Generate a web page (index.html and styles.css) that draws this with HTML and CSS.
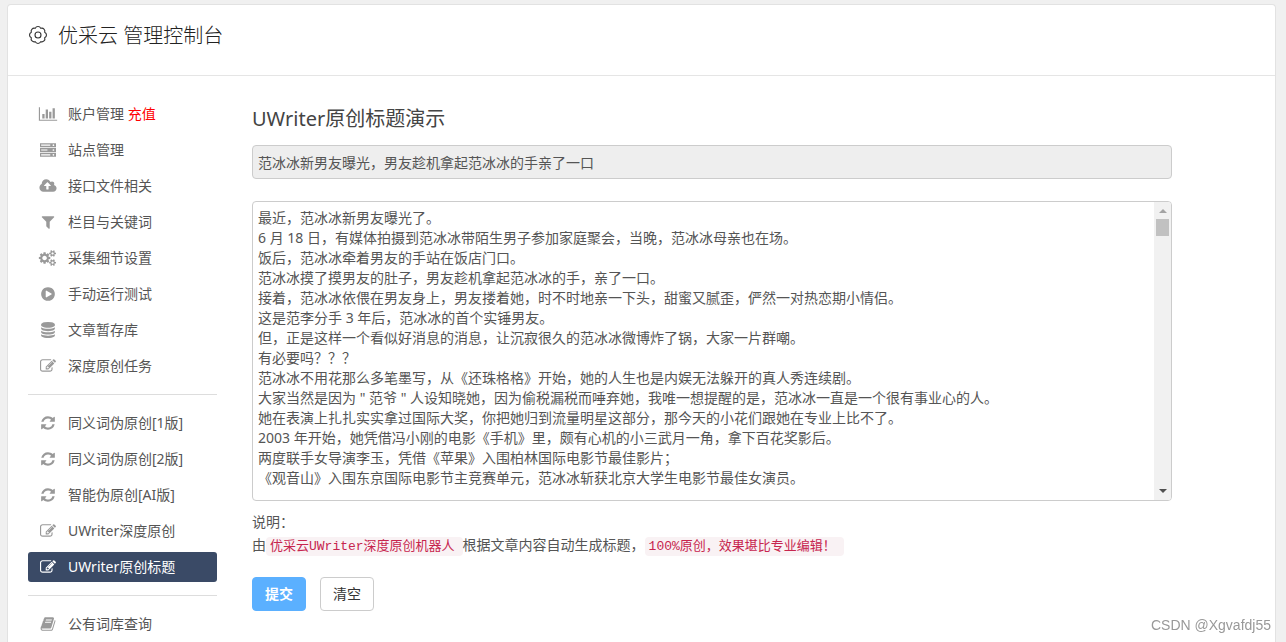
FILE: index.html
```html
<!DOCTYPE html>
<html lang="zh-CN">
<head>
  <meta charset="UTF-8">
  <title>优采云 管理控制台</title>
  <link rel="stylesheet" href="styles.css">
</head>
<body>
<!-- 图标 -->
<svg class="sprite" aria-hidden="true">
  <symbol id="i-chart" viewBox="0 0 2048 1792"><path d="M640 896v512h-256v-512h256zm384-512v1024h-256v-1024h256zm1024 1152v128h-2048v-1536h128v1408h1920zm-640-896v768h-256v-768h256zm384-384v1152h-256v-1152h256z"/></symbol>
  <symbol id="i-server" viewBox="0 0 1792 1792"><path fill-rule="evenodd" d="M0 128h1792v448h-1792zM128 288v128h1024v-128zM1504 256a96 96 0 1 0 0 192 96 96 0 1 0 0-192zM0 672h1792v448h-1792zM128 832v128h704v-128zM1504 800a96 96 0 1 0 0 192 96 96 0 1 0 0-192zM0 1216h1792v448h-1792zM128 1376v128h1024v-128zM1504 1344a96 96 0 1 0 0 192 96 96 0 1 0 0-192z"/></symbol>
  <symbol id="i-cloud" viewBox="0 0 1920 1792"><path d="M1280 864q0-14-9-23l-352-352q-9-9-23-9t-23 9l-351 351q-10 12-10 24 0 14 9 23t23 9h224v352q0 13 9.500 22.500t22.500 9.500h192q13 0 22.500-9.500t9.500-22.500v-352h224q13 0 22.500-9.500t9.500-22.500zm640 288q0 159-112.500 271.500t-271.500 112.500h-1088q-185 0-316.500-131.500t-131.500-316.500q0-130 70-240t188-165q-2-30-2-43 0-212 150-362t362-150q156 0 285.500 87t188.500 231q71-62 166-62 106 0 181 75t75 181q0 76-41 138 130 31 213.500 135.500t83.500 238.500z"/></symbol>
  <symbol id="i-filter" viewBox="0 0 1792 1792"><path d="M1595 295q17 41-14 70l-493 493v742q0 42-39 59-13 5-25 5-27 0-45-19l-256-256q-19-19-19-45v-486l-493-493q-31-29-14-70 17-39 59-39h1280q42 0 59 39z"/></symbol>
  <symbol id="i-cogs" viewBox="0 0 1920 1792"><path d="M832 896q0-106-75-181t-181-75-181 75-75 181 75 181 181 75 181-75 75-181zm768 512q0-52-38-90t-90-38-90 38-38 90q0 53 37.500 90.500t90.500 37.500 90.500-37.500 37.500-90.500zm0-1024q0-52-38-90t-90-38-90 38-38 90q0 53 37.500 90.500t90.500 37.500 90.500-37.500 37.500-90.500zm-384 421v185q0 10-7 19.500t-16 10.500l-155 24q-11 35-32 76 34 48 90 115 7 11 7 20 0 12-7 19-23 30-82.500 89.500t-78.500 59.500q-11 0-21-7l-115-90q-37 19-77 31-11 108-23 155-7 24-30 24h-186q-11 0-20-7.500t-10-17.500l-23-153q-34-10-75-31l-118 89q-7 7-20 7-11 0-21-8-144-133-144-160 0-9 7-19 10-14 41-53t47-61q-23-44-35-82l-152-24q-10-1-17-9.500t-7-19.500v-185q0-10 7-19.500t16-10.500l155-24q11-35 32-76-34-48-90-115-7-11-7-20 0-12 7-20 22-30 82-89t79-59q11 0 21 7l115 90q34-18 77-32 11-108 23-154 7-24 30-24h186q11 0 20 7.500t10 17.500l23 153q34 10 75 31l118-89q8-7 20-7 11 0 21 8 144 133 144 160 0 8-7 19-12 16-42 54t-45 60q23 48 34 82l152 23q10 2 17 10.500t7 19.500zm640 533v140q0 16-149 31-12 27-30 52 51 113 51 138 0 4-4 7-122 71-124 71-8 0-46-47t-52-68q-20 2-30 2t-30-2q-14 21-52 68t-46 47q-2 0-124-71-4-3-4-7 0-25 51-138-18-25-30-52-149-15-149-31v-140q0-16 149-31 13-29 30-52-51-113-51-138 0-4 4-7 4-2 35-20t59-34 30-16q8 0 46 46.500t52 67.500q20-2 30-2t30 2q51-71 92-112l6-2q4 0 124 70 4 3 4 7 0 25-51 138 17 23 30 52 149 15 149 31zm0-1024v140q0 16-149 31-12 27-30 52 51 113 51 138 0 4-4 7-122 71-124 71-8 0-46-47t-52-68q-20 2-30 2t-30-2q-14 21-52 68t-46 47q-2 0-124-71-4-3-4-7 0-25 51-138-18-25-30-52-149-15-149-31v-140q0-16 149-31 13-29 30-52-51-113-51-138 0-4 4-7 4-2 35-20t59-34 30-16q8 0 46 46.500t52 67.500q20-2 30-2t30 2q51-71 92-112l6-2q4 0 124 70 4 3 4 7 0 25-51 138 17 23 30 52 149 15 149 31z"/></symbol>
  <symbol id="i-play" viewBox="0 0 1792 1792"><path d="M896 128q209 0 385.500 103t279.500 279.500 103 385.500-103 385.500-279.500 279.500-385.500 103-385.500-103-279.500-279.500-103-385.500 103-385.500 279.500-279.500 385.500-103zm384 823q32-18 32-55t-32-55l-544-320q-31-19-64-1-32 19-32 56v640q0 37 32 56 16 8 32 8 17 0 32-9z"/></symbol>
  <symbol id="i-database" viewBox="0 0 1792 1792"><path d="M896 768q237 0 443-43t325-127v170q0 69-103 128t-280 93.500-385 34.500-385-34.500-280-93.500-103-128v-170q119 84 325 127t443 43zm0 768q237 0 443-43t325-127v170q0 69-103 128t-280 93.500-385 34.500-385-34.500-280-93.500-103-128v-170q119 84 325 127t443 43zm0-384q237 0 443-43t325-127v170q0 69-103 128t-280 93.500-385 34.500-385-34.500-280-93.500-103-128v-170q119 84 325 127t443 43zm0-1152q208 0 385 34.500t280 93.500 103 128v128q0 69-103 128t-280 93.500-385 34.500-385-34.500-280-93.500-103-128v-128q0-69 103-128t280-93.500 385-34.500z"/></symbol>
  <symbol id="i-edit" viewBox="0 0 1792 1792"><path d="M888 1184l116-116-152-152-116 116v56h96v96h56zm440-720q-16-16-33 1l-350 350q-17 17-1 33t33-1l350-350q17-17 1-33zm80 594v190q0 119-84.500 203.500t-203.500 84.500h-832q-119 0-203.500-84.500t-84.500-203.500v-832q0-119 84.500-203.500t203.500-84.500h832q63 0 117 25 15 7 18 23 3 17-9 29l-49 49q-14 14-32 8-23-6-45-6h-832q-66 0-113 47t-47 113v832q0 66 47 113t113 47h832q66 0 113-47t47-113v-126q0-13 9-22l64-64q15-15 35-7t20 29zm-96-738l288 288-672 672h-288v-288zm444 132l-92 92-288-288 92-92q28-28 68-28t68 28l152 152q28 28 28 68t-28 68z"/></symbol>
  <symbol id="i-refresh" viewBox="0 0 1792 1792"><path d="M1639 1056q0 5-1 7-64 268-268 434.500t-478 166.500q-146 0-282.500-55t-243.500-157l-129 129q-19 19-45 19t-45-19-19-45v-448q0-26 19-45t45-19h448q26 0 45 19t19 45-19 45l-137 137q71 66 161 102t187 36q134 0 250-65t186-179q11-17 53-117 8-23 30-23h192q13 0 22.500 9.500t9.500 22.500zm25-800v448q0 26-19 45t-45 19h-448q-26 0-45-19t-19-45 19-45l138-138q-148-137-349-137-134 0-250 65t-186 179q-11 17-53 117-8 23-30 23h-199q-13 0-22.500-9.500t-9.500-22.500v-7q65-268 270-434.500t480-166.500q146 0 284 55.500t245 156.500l130-129q19-19 45-19t45 19 19 45z"/></symbol>
  <symbol id="i-book" viewBox="0 0 1792 1792"><path d="M1703 478q40 57 18 129l-275 906q-19 64-76.500 107.500t-122.500 43.500h-923q-77 0-148.500-53.500t-99.500-131.500q-24-67-2-127 0-4 3-27t4-37q1-8-3-21.500t-3-19.500q2-11 8-21t16.500-23.500 16.500-23.500q23-38 45-91.500t30-91.500q3-10 .5-30t-.5-28q3-11 17-28t17-23q21-36 42-92t25-90q1-9-2.500-32t.5-28q4-13 22-30.500t22-22.500q19-26 42.500-84.500t27.500-96.500q1-8-3-25.500t-2-26.500q2-8 9-18t18-23 17-21q8-12 16.500-30.500t15-35 16-36 19.500-32 26.500-23.500 36-11.500 47.500 5.500l-1 3q38-9 51-9h761q74 0 114 56t18 130l-274 906q-36 119-71.500 153.500t-128.500 34.500h-869q-27 0-38 15-11 16-1 43 24 70 144 70h923q29 0 56-15.500t35-41.500l300-987q7-22 5-57 38 15 59 43zm-1064 2q-4 13 2 22.500t20 9.500h608q13 0 25.500-9.500t16.500-22.500l21-64q4-13-2-22.500t-20-9.500h-608q-13 0-25.500 9.500t-16.500 22.500zm-83 256q-4 13 2 22.500t20 9.500h608q13 0 25.500-9.500t16.500-22.500l21-64q4-13-2-22.500t-20-9.500h-608q-13 0-25.500 9.500t-16.500 22.500z"/></symbol>
</svg>

<div class="panel">
  <div class="header">
    <svg class="gear" viewBox="0 0 20 20" aria-hidden="true">
      <path d="M7.240 3.350A3 3 0 0 1 12.760 3.350A3 3 0 0 1 16.650 7.240A3 3 0 0 1 16.650 12.760A3 3 0 0 1 12.760 16.650A3 3 0 0 1 7.240 16.650A3 3 0 0 1 3.350 12.760A3 3 0 0 1 3.350 7.240A3 3 0 0 1 7.240 3.350z"/>
      <circle cx="10" cy="10" r="3"/>
    </svg>
    <h1>优采云 管理控制台</h1>
  </div>
  <div class="body">
    <nav class="menu">
      <a href="#"><svg><use href="#i-chart"/></svg><span>账户管理 <em>充值</em></span></a>
      <a href="#"><svg><use href="#i-server"/></svg>站点管理</a>
      <a href="#"><svg><use href="#i-cloud"/></svg>接口文件相关</a>
      <a href="#"><svg><use href="#i-filter"/></svg>栏目与关键词</a>
      <a href="#"><svg><use href="#i-cogs"/></svg>采集细节设置</a>
      <a href="#"><svg><use href="#i-play"/></svg>手动运行测试</a>
      <a href="#"><svg><use href="#i-database"/></svg>文章暂存库</a>
      <a href="#"><svg><use href="#i-edit"/></svg>深度原创任务</a>
      <hr>
      <a href="#"><svg><use href="#i-refresh"/></svg>同义词伪原创[1版]</a>
      <a href="#"><svg><use href="#i-refresh"/></svg>同义词伪原创[2版]</a>
      <a href="#"><svg><use href="#i-refresh"/></svg>智能伪原创[AI版]</a>
      <a href="#"><svg><use href="#i-edit"/></svg>UWriter深度原创</a>
      <a href="#" class="on"><svg><use href="#i-edit"/></svg>UWriter原创标题</a>
      <hr>
      <a href="#"><svg><use href="#i-book"/></svg>公有词库查询</a>
    </nav>
    <form class="main">
      <h2>UWriter原创标题演示</h2>
      <input class="field" type="text" aria-label="标题" value="范冰冰新男友曝光，男友趁机拿起范冰冰的手亲了一口" readonly>
      <div class="article">
        <textarea class="field" aria-label="文章内容">最近，范冰冰新男友曝光了。
6 月 18 日，有媒体拍摄到范冰冰带陌生男子参加家庭聚会，当晚，范冰冰母亲也在场。
饭后，范冰冰牵着男友的手站在饭店门口。
范冰冰摸了摸男友的肚子，男友趁机拿起范冰冰的手，亲了一口。
接着，范冰冰依偎在男友身上，男友搂着她，时不时地亲一下头，甜蜜又腻歪，俨然一对热恋期小情侣。
这是范李分手 3 年后，范冰冰的首个实锤男友。
但，正是这样一个看似好消息的消息，让沉寂很久的范冰冰微博炸了锅，大家一片群嘲。
有必要吗？？？
范冰冰不用花那么多笔墨写，从《还珠格格》开始，她的人生也是内娱无法躲开的真人秀连续剧。
大家当然是因为 " 范爷 " 人设知晓她，因为偷税漏税而唾弃她，我唯一想提醒的是，范冰冰一直是一个很有事业心的人。
她在表演上扎扎实实拿过国际大奖，你把她归到流量明星这部分，那今天的小花们跟她在专业上比不了。
2003 年开始，她凭借冯小刚的电影《手机》里，颇有心机的小三武月一角，拿下百花奖影后。
两度联手女导演李玉，凭借《苹果》入围柏林国际电影节最佳影片；
《观音山》入围东京国际电影节主竞赛单元，范冰冰斩获北京大学生电影节最佳女演员。</textarea>
        <div class="scrollbar" aria-hidden="true">
          <svg class="up" viewBox="0 0 8 4"><path d="M0 4l4-4 4 4z"/></svg>
          <div class="thumb"></div>
          <svg class="down" viewBox="0 0 8 4"><path d="M0 0l4 4 4-4z"/></svg>
        </div>
      </div>
      <div class="help">
        <p>说明：</p>
        <p>由<code>优采云UWriter深度原创机器人</code>根据文章内容自动生成标题，<code>100%原创，效果堪比专业编辑！</code></p>
      </div>
      <div class="buttons">
        <button type="submit" class="btn btn_primary">提交</button>
        <button type="reset" class="btn">清空</button>
      </div>
    </form>
  </div>
</div>
<div class="watermark">CSDN @Xgvafdj55</div>
</body>
</html>
```

FILE: styles.css
```css
* {
  box-sizing: border-box;
  margin: 0;
  padding: 0;
}
body {
  padding: 4px 10px 0 7px;
  background: #f0f0f0;
  color: #555;
  font: 14px/20px "Noto Sans", "Noto Sans CJK SC", sans-serif;
  overflow: hidden;
}
a {
  color: #555;
  text-decoration: none;
}
.sprite {
  display: none;
}
.panel {
  min-height: calc(100vh - 4px);
  border: 1px solid #e2e2e2;
  border-bottom: 0;
  border-radius: 4px 4px 0 0;
  background: #fff;
}
.header {
  display: flex;
  align-items: center;
  gap: 10px;
  height: 71px;
  padding: 0 20px 10px;
  border-bottom: 1px solid #e5e5e5;
}
.header h1 {
  padding-top: 2px;
  color: #222;
  font-size: 20px;
  line-height: 28px;
  font-weight: 300;
}
.header .gear {
  width: 20px;
  height: 20px;
  fill: none;
  stroke: #333;
  stroke-width: 1.1;
  stroke-linejoin: round;
}
.body {
  display: flex;
  gap: 35px;
  padding: 23px 103px 0 20px;
}

/* 左侧菜单 */
.menu {
  display: flex;
  flex-direction: column;
  flex: none;
  gap: 6px;
  width: 189px;
}
.menu a {
  display: flex;
  align-items: center;
  gap: 10px;
  height: 30px;
  padding: 0 10px;
  border-radius: 3px;
}
.menu svg {
  width: 20px;
  height: 16px;
  fill: #999;
}
.menu em {
  color: #f00;
  font-style: normal;
}
.menu hr {
  margin: 7px 0;
  border: 0;
  border-top: 1px solid #ddd;
}
.menu .on {
  background: #3a4a66;
  color: #fff;
}
.menu .on svg {
  fill: #fff;
}

/* 右侧内容 */
.main {
  flex: 1;
  min-width: 0;
  padding-top: 6px;
}
.main h2 {
  margin-bottom: 12px;
  color: #444;
  font-size: 20px;
  line-height: 28px;
  font-weight: 400;
}
.field {
  display: block;
  width: 100%;
  height: 34px;
  padding: 6px 5px;
  border: 1px solid #ccc;
  border-radius: 4px;
  background: #fff;
  color: #555;
  font: inherit;
}
.field:read-only {
  background: #eee;
}
.article {
  position: relative;
  margin-top: 22px;
}
.article .field {
  height: 300px;
  padding-right: 22px;
  resize: none;
}
.scrollbar {
  position: absolute;
  top: 1px;
  right: 1px;
  bottom: 1px;
  display: flex;
  flex-direction: column;
  align-items: center;
  width: 17px;
  border-radius: 0 3px 3px 0;
  background: #f1f1f1;
}
.scrollbar svg {
  width: 8px;
  height: 4px;
}
.scrollbar .up {
  margin: 7px 0 6px;
  fill: #a3a3a3;
}
.scrollbar .thumb {
  width: 13px;
  height: 17px;
  background: #c1c1c1;
}
.scrollbar .down {
  margin: auto 0 7px;
  fill: #505050;
}
.help {
  margin-top: 9px;
  line-height: 23px;
}
.help code {
  padding: 2px 8px 2px 4px;
  border-radius: 4px;
  background: #f9f2f4;
  color: #c7254e;
  font: 13px "Liberation Mono", "Noto Sans CJK SC", monospace;
}
.buttons {
  display: flex;
  gap: 14px;
  margin-top: 21px;
}
.btn {
  height: 34px;
  padding: 0 12px;
  border: 1px solid #ccc;
  border-radius: 4px;
  background: #fff;
  color: #333;
  font: inherit;
}
.btn_primary {
  border-color: #5bb0ff;
  background: #5bb0ff;
  color: #fff;
  font-weight: 700;
}
.watermark {
  position: fixed;
  right: 15px;
  bottom: 7px;
  color: #999;
  font: 14px/20px "Liberation Sans", sans-serif;
}
```
